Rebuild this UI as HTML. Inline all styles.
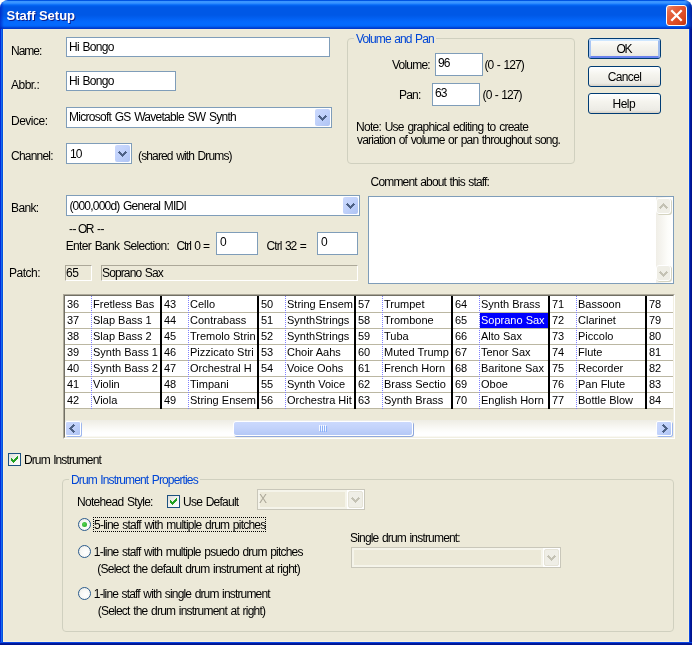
<!DOCTYPE html>
<html><head><meta charset="utf-8"><title>Staff Setup</title>
<style>
html,body{margin:0;padding:0;background:#fff;}
body{width:692px;height:645px;position:relative;overflow:hidden;font-family:"Liberation Sans",sans-serif;font-size:11px;color:#000;}
.a{position:absolute;box-sizing:border-box;}
.t{position:absolute;white-space:pre;}
.edit{position:absolute;box-sizing:border-box;border:1px solid #7F9DB9;background:#fff;}
.cbtn{position:absolute;box-sizing:border-box;width:15px;height:17px;border-radius:2px;background:linear-gradient(135deg,#CBD9FD 0%,#C1D2FB 45%,#AEC3F3 100%);}
.cbtn svg{position:absolute;left:3px;top:6px;}
.grp{position:absolute;box-sizing:border-box;border:1px solid #D0D0BF;border-radius:4px;}
.btn{position:absolute;box-sizing:border-box;width:73px;height:21px;border:1px solid #003C74;border-radius:3px;background:linear-gradient(180deg,#FFFFFF 0%,#F5F4EE 40%,#ECEBE5 85%,#D6D0C5 100%);}
.sunk{position:absolute;box-sizing:border-box;border-top:1px solid #ACA899;border-left:1px solid #ACA899;border-right:1px solid #fff;border-bottom:1px solid #fff;}
.dot{position:absolute;width:1px;background:repeating-linear-gradient(180deg,#8080FF 0px,#8080FF 1px,rgba(255,255,255,0) 1px,rgba(255,255,255,0) 2px);}
.chk{position:absolute;box-sizing:border-box;width:13px;height:13px;border:1px solid #1C5180;background:linear-gradient(135deg,#DCDCD7 0%,#F3F3EF 50%,#FFFFFF 100%);}
.chk svg{position:absolute;left:1px;top:1px;}
.rad{position:absolute;box-sizing:border-box;width:13px;height:13px;border:1px solid #2A5B8C;border-radius:50%;background:radial-gradient(circle at 60% 60%,#FFFFFF 0%,#F8F8F5 50%,#E4E4DE 100%);}
.dcombo{position:absolute;box-sizing:border-box;border:1px solid #C9C7BA;background:#F5F4EA;}
</style></head><body>
<!-- window frame -->
<div class="a" id="title" style="left:0;top:0;width:692px;height:29px;border-radius:8px 8px 0 0;background:linear-gradient(180deg,#0054E3 0px,#0054E3 1px,#3B96FF 1px,#3A94FF 3px,#1C7FFE 4px,#0668F5 5px,#005EEC 6px,#0058E6 7px,#0058E6 15px,#025FF0 18px,#0467FB 21px,#046BFF 24px,#0366FA 26px,#0054E4 27px,#003DD0 28px,#0037CB 29px);overflow:hidden"><div class="a" style="left:685px;top:0;width:7px;height:29px;background:linear-gradient(90deg,rgba(0,25,150,0) 0%,rgba(0,25,150,0.35) 50%,rgba(0,20,140,0.85) 100%)"></div><div class="a" style="left:0;top:0;width:4px;height:29px;background:linear-gradient(90deg,rgba(0,30,190,0.7) 0%,rgba(0,30,190,0) 100%)"></div></div>
<div class="a" style="left:0;top:29px;width:1px;height:616px;background:#0429D9"></div>
<div class="a" style="left:1px;top:29px;width:1px;height:616px;background:#166AEE"></div>
<div class="a" style="left:2px;top:29px;width:1px;height:616px;background:#0551DD"></div>
<div class="a" style="left:689px;top:29px;width:1px;height:616px;background:#0B47E2"></div>
<div class="a" style="left:690px;top:29px;width:1px;height:616px;background:#001A9F"></div>
<div class="a" style="left:691px;top:29px;width:1px;height:616px;background:#00148E"></div>
<div class="a" style="left:3px;top:29px;width:686px;height:613px;background:#ECE9D8;border:1px solid #F6F0DA;border-top-color:#EFEBD9"></div>
<div class="a" style="left:0;top:642px;width:692px;height:1px;background:#0B47E2"></div>
<div class="a" style="left:0;top:643px;width:692px;height:1px;background:#001A9F"></div>
<div class="a" style="left:0;top:644px;width:692px;height:1px;background:#00148E"></div>
<!-- close button -->
<div class="a" style="left:666px;top:5px;width:21px;height:21px;border:1px solid #fff;border-radius:3px;background:linear-gradient(135deg,#EFA08C 0%,#E56B48 18%,#E1532D 50%,#DA471F 75%,#BE340E 100%);">
<svg width="19" height="19" viewBox="0 0 19 19" style="position:absolute;left:0;top:0"><path d="M4.3 4.3 L14.7 14.7 M14.7 4.3 L4.3 14.7" stroke="#fff" stroke-width="2.3" stroke-linecap="butt" fill="none"/></svg></div>

<!-- edits / combos -->
<div class="edit" style="left:66px;top:37px;width:264px;height:20px"></div>
<div class="edit" style="left:66px;top:71px;width:110px;height:20px"></div>
<div class="edit" style="left:66px;top:107px;width:266px;height:21px"><div class="cbtn" style="right:1px;top:1px"><svg width="9" height="6" viewBox="0 0 9 6" shape-rendering="crispEdges"><path fill="#4D6185" d="M1 0h1v1h-1zM7 0h1v1h-1zM0 1h3v1h-3zM6 1h3v1h-3zM1 2h3v1h-3zM5 2h3v1h-3zM2 3h5v1h-5zM3 4h3v1h-3zM4 5h1v1h-1z"/></svg></div></div>
<div class="edit" style="left:66px;top:143px;width:66px;height:21px"><div class="cbtn" style="right:1px;top:1px"><svg width="9" height="6" viewBox="0 0 9 6" shape-rendering="crispEdges"><path fill="#4D6185" d="M1 0h1v1h-1zM7 0h1v1h-1zM0 1h3v1h-3zM6 1h3v1h-3zM1 2h3v1h-3zM5 2h3v1h-3zM2 3h5v1h-5zM3 4h3v1h-3zM4 5h1v1h-1z"/></svg></div></div>
<div class="edit" style="left:66px;top:195px;width:294px;height:21px"><div class="cbtn" style="right:1px;top:1px"><svg width="9" height="6" viewBox="0 0 9 6" shape-rendering="crispEdges"><path fill="#4D6185" d="M1 0h1v1h-1zM7 0h1v1h-1zM0 1h3v1h-3zM6 1h3v1h-3zM1 2h3v1h-3zM5 2h3v1h-3zM2 3h5v1h-5zM3 4h3v1h-3zM4 5h1v1h-1z"/></svg></div></div>
<div class="edit" style="left:216px;top:232px;width:42px;height:23px"></div>
<div class="edit" style="left:317px;top:232px;width:41px;height:23px"></div>
<div class="sunk" style="left:65px;top:265px;width:27px;height:16px"></div>
<div class="sunk" style="left:101px;top:265px;width:257px;height:16px"></div>

<!-- volume & pan group -->
<div class="grp" style="left:347px;top:38px;width:228px;height:126px"></div>
<div class="a" style="left:354px;top:38px;width:82px;height:1px;background:#ECE9D8"></div>
<div class="edit" style="left:435px;top:53px;width:48px;height:23px"></div>
<div class="edit" style="left:432px;top:83px;width:48px;height:23px"></div>

<!-- buttons -->
<div class="btn" style="left:588px;top:38px"><div class="a" style="left:0;top:0;width:71px;height:19px;border-radius:2px;border-style:solid;border-width:2px;border-color:#CEE7FF #9DBBEE #6982EE #A9C6F4"></div></div>
<div class="btn" style="left:588px;top:66px"></div>
<div class="btn" style="left:588px;top:93px"></div>

<!-- comment textarea -->
<div class="edit" style="left:368px;top:196px;width:306px;height:88px">
 <div class="a" style="right:0;top:0;width:17px;height:86px;background:linear-gradient(90deg,#F0EEE7 0%,#F6F5F0 35%,#FDFDFA 70%,#FFFFFF 100%)"></div>
 <div class="a" style="left:287px;top:1px;width:15px;height:16px;border-radius:3px;background:#EFEEE6;border:1px solid #fff;box-shadow:1px 1px 0 #D5D4C0"><svg width="9" height="6" viewBox="0 0 9 6" style="position:absolute;left:2px;top:4px" shape-rendering="crispEdges"><path fill="#C4C2B4" d="M4 0h1v1h-1zM3 1h3v1h-3zM2 2h5v1h-5zM1 3h3v1h-3zM5 3h3v1h-3zM0 4h3v1h-3zM6 4h3v1h-3zM1 5h1v1h-1zM7 5h1v1h-1z"/></svg></div>
 <div class="a" style="left:287px;top:68px;width:15px;height:16px;border-radius:3px;background:#EFEEE6;border:1px solid #fff;box-shadow:1px 1px 0 #D5D4C0"><svg width="9" height="6" viewBox="0 0 9 6" style="position:absolute;left:2px;top:5px" shape-rendering="crispEdges"><path fill="#C4C2B4" d="M1 0h1v1h-1zM7 0h1v1h-1zM0 1h3v1h-3zM6 1h3v1h-3zM1 2h3v1h-3zM5 2h3v1h-3zM2 3h5v1h-5zM3 4h3v1h-3zM4 5h1v1h-1z"/></svg></div>
</div>

<!-- grid -->
<div class="a" style="left:63px;top:294px;width:612px;height:145px;border-top:1px solid #ACA899;border-left:1px solid #ACA899;border-right:1px solid #fff;border-bottom:1px solid #fff;"></div>
<div class="a" style="left:64px;top:295px;width:610px;height:143px;border-top:1px solid #716F64;border-left:1px solid #716F64;border-right:1px solid #F1EFE2;border-bottom:1px solid #F1EFE2;"></div>
<div id="gl" style="position:absolute;left:0;top:0;width:692px;height:645px;will-change:transform"><div style="position:absolute;left:65px;top:296px;width:608px;height:113px;background:#fff"></div>
<div style="position:absolute;left:65px;top:312px;width:608px;height:1px;background:#BBB7A2"></div>
<div style="position:absolute;left:65px;top:328px;width:608px;height:1px;background:#BBB7A2"></div>
<div style="position:absolute;left:65px;top:344px;width:608px;height:1px;background:#BBB7A2"></div>
<div style="position:absolute;left:65px;top:360px;width:608px;height:1px;background:#BBB7A2"></div>
<div style="position:absolute;left:65px;top:376px;width:608px;height:1px;background:#BBB7A2"></div>
<div style="position:absolute;left:65px;top:392px;width:608px;height:1px;background:#BBB7A2"></div>
<div style="position:absolute;left:65px;top:408px;width:608px;height:1px;background:#BBB7A2"></div>
<div class="dot" style="left:91px;top:296px;height:113px"></div>
<div style="position:absolute;left:160px;top:296px;width:2px;height:113px;background:#000"></div>
<span class="t" style="left:67px;top:299px;font-size:11px;line-height:11px">36</span>
<span class="t" style="left:93px;top:299px;font-size:11px;line-height:11px;color:#000;width:67px;overflow:hidden;height:13px">Fretless Bas</span>
<span class="t" style="left:67px;top:315px;font-size:11px;line-height:11px">37</span>
<span class="t" style="left:93px;top:315px;font-size:11px;line-height:11px;color:#000;width:67px;overflow:hidden;height:13px">Slap Bass 1</span>
<span class="t" style="left:67px;top:331px;font-size:11px;line-height:11px">38</span>
<span class="t" style="left:93px;top:331px;font-size:11px;line-height:11px;color:#000;width:67px;overflow:hidden;height:13px">Slap Bass 2</span>
<span class="t" style="left:67px;top:347px;font-size:11px;line-height:11px">39</span>
<span class="t" style="left:93px;top:347px;font-size:11px;line-height:11px;color:#000;width:67px;overflow:hidden;height:13px">Synth Bass 1</span>
<span class="t" style="left:67px;top:363px;font-size:11px;line-height:11px">40</span>
<span class="t" style="left:93px;top:363px;font-size:11px;line-height:11px;color:#000;width:67px;overflow:hidden;height:13px">Synth Bass 2</span>
<span class="t" style="left:67px;top:379px;font-size:11px;line-height:11px">41</span>
<span class="t" style="left:93px;top:379px;font-size:11px;line-height:11px;color:#000;width:67px;overflow:hidden;height:13px">Violin</span>
<span class="t" style="left:67px;top:395px;font-size:11px;line-height:11px">42</span>
<span class="t" style="left:93px;top:395px;font-size:11px;line-height:11px;color:#000;width:67px;overflow:hidden;height:13px">Viola</span>
<div class="dot" style="left:188px;top:296px;height:113px"></div>
<div style="position:absolute;left:257px;top:296px;width:2px;height:113px;background:#000"></div>
<span class="t" style="left:164px;top:299px;font-size:11px;line-height:11px">43</span>
<span class="t" style="left:190px;top:299px;font-size:11px;line-height:11px;color:#000;width:67px;overflow:hidden;height:13px">Cello</span>
<span class="t" style="left:164px;top:315px;font-size:11px;line-height:11px">44</span>
<span class="t" style="left:190px;top:315px;font-size:11px;line-height:11px;color:#000;width:67px;overflow:hidden;height:13px">Contrabass</span>
<span class="t" style="left:164px;top:331px;font-size:11px;line-height:11px">45</span>
<span class="t" style="left:190px;top:331px;font-size:11px;line-height:11px;color:#000;width:67px;overflow:hidden;height:13px">Tremolo Strin</span>
<span class="t" style="left:164px;top:347px;font-size:11px;line-height:11px">46</span>
<span class="t" style="left:190px;top:347px;font-size:11px;line-height:11px;color:#000;width:67px;overflow:hidden;height:13px">Pizzicato Stri</span>
<span class="t" style="left:164px;top:363px;font-size:11px;line-height:11px">47</span>
<span class="t" style="left:190px;top:363px;font-size:11px;line-height:11px;color:#000;width:67px;overflow:hidden;height:13px">Orchestral H</span>
<span class="t" style="left:164px;top:379px;font-size:11px;line-height:11px">48</span>
<span class="t" style="left:190px;top:379px;font-size:11px;line-height:11px;color:#000;width:67px;overflow:hidden;height:13px">Timpani</span>
<span class="t" style="left:164px;top:395px;font-size:11px;line-height:11px">49</span>
<span class="t" style="left:190px;top:395px;font-size:11px;line-height:11px;color:#000;width:67px;overflow:hidden;height:13px">String Ensem</span>
<div class="dot" style="left:285px;top:296px;height:113px"></div>
<div style="position:absolute;left:354px;top:296px;width:2px;height:113px;background:#000"></div>
<span class="t" style="left:261px;top:299px;font-size:11px;line-height:11px">50</span>
<span class="t" style="left:287px;top:299px;font-size:11px;line-height:11px;color:#000;width:67px;overflow:hidden;height:13px">String Ensem</span>
<span class="t" style="left:261px;top:315px;font-size:11px;line-height:11px">51</span>
<span class="t" style="left:287px;top:315px;font-size:11px;line-height:11px;color:#000;width:67px;overflow:hidden;height:13px">SynthStrings</span>
<span class="t" style="left:261px;top:331px;font-size:11px;line-height:11px">52</span>
<span class="t" style="left:287px;top:331px;font-size:11px;line-height:11px;color:#000;width:67px;overflow:hidden;height:13px">SynthStrings</span>
<span class="t" style="left:261px;top:347px;font-size:11px;line-height:11px">53</span>
<span class="t" style="left:287px;top:347px;font-size:11px;line-height:11px;color:#000;width:67px;overflow:hidden;height:13px">Choir Aahs</span>
<span class="t" style="left:261px;top:363px;font-size:11px;line-height:11px">54</span>
<span class="t" style="left:287px;top:363px;font-size:11px;line-height:11px;color:#000;width:67px;overflow:hidden;height:13px">Voice Oohs</span>
<span class="t" style="left:261px;top:379px;font-size:11px;line-height:11px">55</span>
<span class="t" style="left:287px;top:379px;font-size:11px;line-height:11px;color:#000;width:67px;overflow:hidden;height:13px">Synth Voice</span>
<span class="t" style="left:261px;top:395px;font-size:11px;line-height:11px">56</span>
<span class="t" style="left:287px;top:395px;font-size:11px;line-height:11px;color:#000;width:67px;overflow:hidden;height:13px">Orchestra Hit</span>
<div class="dot" style="left:382px;top:296px;height:113px"></div>
<div style="position:absolute;left:451px;top:296px;width:2px;height:113px;background:#000"></div>
<span class="t" style="left:358px;top:299px;font-size:11px;line-height:11px">57</span>
<span class="t" style="left:384px;top:299px;font-size:11px;line-height:11px;color:#000;width:67px;overflow:hidden;height:13px">Trumpet</span>
<span class="t" style="left:358px;top:315px;font-size:11px;line-height:11px">58</span>
<span class="t" style="left:384px;top:315px;font-size:11px;line-height:11px;color:#000;width:67px;overflow:hidden;height:13px">Trombone</span>
<span class="t" style="left:358px;top:331px;font-size:11px;line-height:11px">59</span>
<span class="t" style="left:384px;top:331px;font-size:11px;line-height:11px;color:#000;width:67px;overflow:hidden;height:13px">Tuba</span>
<span class="t" style="left:358px;top:347px;font-size:11px;line-height:11px">60</span>
<span class="t" style="left:384px;top:347px;font-size:11px;line-height:11px;color:#000;width:67px;overflow:hidden;height:13px">Muted Trump</span>
<span class="t" style="left:358px;top:363px;font-size:11px;line-height:11px">61</span>
<span class="t" style="left:384px;top:363px;font-size:11px;line-height:11px;color:#000;width:67px;overflow:hidden;height:13px">French Horn</span>
<span class="t" style="left:358px;top:379px;font-size:11px;line-height:11px">62</span>
<span class="t" style="left:384px;top:379px;font-size:11px;line-height:11px;color:#000;width:67px;overflow:hidden;height:13px">Brass Sectio</span>
<span class="t" style="left:358px;top:395px;font-size:11px;line-height:11px">63</span>
<span class="t" style="left:384px;top:395px;font-size:11px;line-height:11px;color:#000;width:67px;overflow:hidden;height:13px">Synth Brass</span>
<div class="dot" style="left:479px;top:296px;height:113px"></div>
<div style="position:absolute;left:548px;top:296px;width:2px;height:113px;background:#000"></div>
<span class="t" style="left:455px;top:299px;font-size:11px;line-height:11px">64</span>
<span class="t" style="left:481px;top:299px;font-size:11px;line-height:11px;color:#000;width:67px;overflow:hidden;height:13px">Synth Brass</span>
<div style="position:absolute;left:480px;top:313px;width:68px;height:15px;background:#0000FF"></div>
<span class="t" style="left:455px;top:315px;font-size:11px;line-height:11px">65</span>
<span class="t" style="left:481px;top:315px;font-size:11px;line-height:11px;color:#fff;width:67px;overflow:hidden;height:13px">Soprano Sax</span>
<span class="t" style="left:455px;top:331px;font-size:11px;line-height:11px">66</span>
<span class="t" style="left:481px;top:331px;font-size:11px;line-height:11px;color:#000;width:67px;overflow:hidden;height:13px">Alto Sax</span>
<span class="t" style="left:455px;top:347px;font-size:11px;line-height:11px">67</span>
<span class="t" style="left:481px;top:347px;font-size:11px;line-height:11px;color:#000;width:67px;overflow:hidden;height:13px">Tenor Sax</span>
<span class="t" style="left:455px;top:363px;font-size:11px;line-height:11px">68</span>
<span class="t" style="left:481px;top:363px;font-size:11px;line-height:11px;color:#000;width:67px;overflow:hidden;height:13px">Baritone Sax</span>
<span class="t" style="left:455px;top:379px;font-size:11px;line-height:11px">69</span>
<span class="t" style="left:481px;top:379px;font-size:11px;line-height:11px;color:#000;width:67px;overflow:hidden;height:13px">Oboe</span>
<span class="t" style="left:455px;top:395px;font-size:11px;line-height:11px">70</span>
<span class="t" style="left:481px;top:395px;font-size:11px;line-height:11px;color:#000;width:67px;overflow:hidden;height:13px">English Horn</span>
<div class="dot" style="left:576px;top:296px;height:113px"></div>
<div style="position:absolute;left:645px;top:296px;width:2px;height:113px;background:#000"></div>
<span class="t" style="left:552px;top:299px;font-size:11px;line-height:11px">71</span>
<span class="t" style="left:578px;top:299px;font-size:11px;line-height:11px;color:#000;width:67px;overflow:hidden;height:13px">Bassoon</span>
<span class="t" style="left:552px;top:315px;font-size:11px;line-height:11px">72</span>
<span class="t" style="left:578px;top:315px;font-size:11px;line-height:11px;color:#000;width:67px;overflow:hidden;height:13px">Clarinet</span>
<span class="t" style="left:552px;top:331px;font-size:11px;line-height:11px">73</span>
<span class="t" style="left:578px;top:331px;font-size:11px;line-height:11px;color:#000;width:67px;overflow:hidden;height:13px">Piccolo</span>
<span class="t" style="left:552px;top:347px;font-size:11px;line-height:11px">74</span>
<span class="t" style="left:578px;top:347px;font-size:11px;line-height:11px;color:#000;width:67px;overflow:hidden;height:13px">Flute</span>
<span class="t" style="left:552px;top:363px;font-size:11px;line-height:11px">75</span>
<span class="t" style="left:578px;top:363px;font-size:11px;line-height:11px;color:#000;width:67px;overflow:hidden;height:13px">Recorder</span>
<span class="t" style="left:552px;top:379px;font-size:11px;line-height:11px">76</span>
<span class="t" style="left:578px;top:379px;font-size:11px;line-height:11px;color:#000;width:67px;overflow:hidden;height:13px">Pan Flute</span>
<span class="t" style="left:552px;top:395px;font-size:11px;line-height:11px">77</span>
<span class="t" style="left:578px;top:395px;font-size:11px;line-height:11px;color:#000;width:67px;overflow:hidden;height:13px">Bottle Blow</span>
<span class="t" style="left:649px;top:299px;font-size:11px;line-height:11px">78</span>
<span class="t" style="left:649px;top:315px;font-size:11px;line-height:11px">79</span>
<span class="t" style="left:649px;top:331px;font-size:11px;line-height:11px">80</span>
<span class="t" style="left:649px;top:347px;font-size:11px;line-height:11px">81</span>
<span class="t" style="left:649px;top:363px;font-size:11px;line-height:11px">82</span>
<span class="t" style="left:649px;top:379px;font-size:11px;line-height:11px">83</span>
<span class="t" style="left:649px;top:395px;font-size:11px;line-height:11px">84</span></div>
<!-- grid scrollbar -->
<div class="a" style="left:65px;top:420px;width:608px;height:17px;background:linear-gradient(180deg,#EEEDE5 0px,#F2F1EA 3px,#F8F7F3 7px,#FDFDFB 11px,#FFFFFF 13px,#FFFFFF 16px,#F4F2E8 17px)"></div>
<div class="a" style="left:65px;top:421px;width:16px;height:15px;border:1px solid #fff;border-radius:2px;background:linear-gradient(135deg,#CAD8FD 0%,#C1D2FB 50%,#AEC3F3 100%);box-shadow:1px 1px 0 #9DB6EE"><svg width="6" height="9" viewBox="0 0 6 9" style="position:absolute;left:3px;top:2px" shape-rendering="crispEdges"><path fill="#4D6185" d="M0 4h1v1h-1zM1 3h1v3h-1zM2 2h1v5h-1zM3 1h1v3h-1zM3 5h1v3h-1zM4 0h1v3h-1zM4 6h1v3h-1zM5 1h1v1h-1zM5 7h1v1h-1z"/></svg></div>
<div class="a" style="left:656px;top:421px;width:16px;height:15px;border:1px solid #fff;border-radius:2px;background:linear-gradient(135deg,#CAD8FD 0%,#C1D2FB 50%,#AEC3F3 100%);box-shadow:1px 1px 0 #9DB6EE"><svg width="6" height="9" viewBox="0 0 6 9" style="position:absolute;left:5px;top:2px" shape-rendering="crispEdges"><path fill="#4D6185" d="M5 4h1v1h-1zM4 3h1v3h-1zM3 2h1v5h-1zM2 1h1v3h-1zM2 5h1v3h-1zM1 0h1v3h-1zM1 6h1v3h-1zM0 1h1v1h-1zM0 7h1v1h-1z"/></svg></div>
<div class="a" style="left:233px;top:421px;width:180px;height:15px;border:1px solid #fff;border-radius:3px;background:linear-gradient(180deg,#CBD9FD 0%,#C3D3FB 45%,#B4C8F6 100%);box-shadow:1px 1px 0 #8FA8DC">
 <div class="a" style="left:85px;top:3px;width:8px;height:6px;background:repeating-linear-gradient(90deg,#F4F8FF 0px,#F4F8FF 1px,rgba(0,0,0,0) 1px,rgba(0,0,0,0) 2px)"></div>
 <div class="a" style="left:86px;top:4px;width:8px;height:6px;background:repeating-linear-gradient(90deg,#8CB0F8 0px,#8CB0F8 1px,rgba(0,0,0,0) 1px,rgba(0,0,0,0) 2px)"></div>
</div>

<!-- drum instrument -->
<div class="chk" style="left:8px;top:453px"><svg width="9" height="9" viewBox="0 0 9 9" shape-rendering="crispEdges"><path fill="#21A121" d="M1 3h1v3h-1zM2 4h1v3h-1zM3 5h1v3h-1zM4 4h1v3h-1zM5 3h1v3h-1zM6 2h1v3h-1zM7 1h1v3h-1z"/></svg></div>
<div class="grp" style="left:62px;top:479px;width:612px;height:153px"></div>
<div class="a" style="left:69px;top:479px;width:131px;height:1px;background:#ECE9D8"></div>
<div class="chk" style="left:167px;top:495px"><svg width="9" height="9" viewBox="0 0 9 9" shape-rendering="crispEdges"><path fill="#21A121" d="M1 3h1v3h-1zM2 4h1v3h-1zM3 5h1v3h-1zM4 4h1v3h-1zM5 3h1v3h-1zM6 2h1v3h-1zM7 1h1v3h-1z"/></svg></div>
<div class="dcombo" style="left:257px;top:489px;width:108px;height:21px">
 <div class="a" style="left:2px;top:2px;right:19px;bottom:2px;background:#ECE9D8"></div>
 <div class="a" style="right:0;top:0;width:17px;height:19px;background:#fff"></div>
 <div class="a" style="right:1px;top:1px;width:15px;height:17px;border-radius:2px;background:#EFEEE6;border:1px solid #E6E4D8"><svg width="9" height="6" viewBox="0 0 9 6" style="position:absolute;left:2px;top:5px" shape-rendering="crispEdges"><path fill="#C4C2B4" d="M1 0h1v1h-1zM7 0h1v1h-1zM0 1h3v1h-3zM6 1h3v1h-3zM1 2h3v1h-3zM5 2h3v1h-3zM2 3h5v1h-5zM3 4h3v1h-3zM4 5h1v1h-1z"/></svg></div>
</div>
<div class="dcombo" style="left:351px;top:547px;width:210px;height:21px">
 <div class="a" style="left:2px;top:2px;right:19px;bottom:2px;background:#ECE9D8"></div>
 <div class="a" style="right:0;top:0;width:17px;height:19px;background:#fff"></div>
 <div class="a" style="right:1px;top:1px;width:15px;height:17px;border-radius:2px;background:#EFEEE6;border:1px solid #E6E4D8"><svg width="9" height="6" viewBox="0 0 9 6" style="position:absolute;left:2px;top:5px" shape-rendering="crispEdges"><path fill="#C4C2B4" d="M1 0h1v1h-1zM7 0h1v1h-1zM0 1h3v1h-3zM6 1h3v1h-3zM1 2h3v1h-3zM5 2h3v1h-3zM2 3h5v1h-5zM3 4h3v1h-3zM4 5h1v1h-1z"/></svg></div>
</div>
<div class="rad" style="left:78px;top:518px"><div class="a" style="left:3px;top:3px;width:5px;height:5px;border-radius:50%;background:radial-gradient(circle at 40% 40%,#55D551 0%,#21A121 100%)"></div></div>
<div class="rad" style="left:78px;top:545px"></div>
<div class="rad" style="left:78px;top:587px"></div>
<!-- focus rect -->
<div class="a" style="left:93px;top:517px;width:173px;height:1px;background:repeating-linear-gradient(90deg,#000 0px,#000 1px,rgba(0,0,0,0) 1px,rgba(0,0,0,0) 2px)"></div>
<div class="a" style="left:93px;top:531px;width:173px;height:1px;background:repeating-linear-gradient(90deg,#000 0px,#000 1px,rgba(0,0,0,0) 1px,rgba(0,0,0,0) 2px)"></div>
<div class="a" style="left:93px;top:517px;width:1px;height:15px;background:repeating-linear-gradient(180deg,#000 0px,#000 1px,rgba(0,0,0,0) 1px,rgba(0,0,0,0) 2px)"></div>
<div class="a" style="left:265px;top:517px;width:1px;height:15px;background:repeating-linear-gradient(180deg,#000 0px,#000 1px,rgba(0,0,0,0) 1px,rgba(0,0,0,0) 2px)"></div>

<div id="tl" style="position:absolute;left:0;top:0;width:692px;height:645px;will-change:transform"><span class="t" style="left:6.6px;top:9px;font-size:13px;line-height:13px;color:#fff;letter-spacing:-0.02px;word-spacing:0px;font-weight:bold;text-shadow:1px 1px 0 #0A2090;">Staff Setup</span>
<span class="t" style="left:11.0px;top:45px;font-size:12px;line-height:12px;color:#000;letter-spacing:-1.0px;word-spacing:1.0px;">Name:</span>
<span class="t" style="left:69.0px;top:41px;font-size:12px;line-height:12px;color:#000;letter-spacing:-0.71px;word-spacing:1.0px;">Hi Bongo</span>
<span class="t" style="left:11.0px;top:79px;font-size:12px;line-height:12px;color:#000;letter-spacing:-0.52px;word-spacing:1.0px;">Abbr.:</span>
<span class="t" style="left:69.0px;top:75px;font-size:12px;line-height:12px;color:#000;letter-spacing:-0.71px;word-spacing:1.0px;">Hi Bongo</span>
<span class="t" style="left:11.0px;top:115px;font-size:12px;line-height:12px;color:#000;letter-spacing:-0.5px;word-spacing:1.0px;">Device:</span>
<span class="t" style="left:69.0px;top:111px;font-size:12px;line-height:12px;color:#000;letter-spacing:-0.73px;word-spacing:1.0px;">Microsoft GS Wavetable SW Synth</span>
<span class="t" style="left:11.0px;top:150px;font-size:12px;line-height:12px;color:#000;letter-spacing:-0.79px;word-spacing:1.0px;">Channel:</span>
<span class="t" style="left:70.0px;top:148px;font-size:12px;line-height:12px;color:#000;letter-spacing:-1.0px;word-spacing:1.0px;">10</span>
<span class="t" style="left:138.0px;top:150px;font-size:12px;line-height:12px;color:#000;letter-spacing:-0.86px;word-spacing:1.0px;">(shared with Drums)</span>
<span class="t" style="left:356.0px;top:33px;font-size:12px;line-height:12px;color:#0046D5;letter-spacing:-0.88px;word-spacing:1.0px;">Volume and Pan</span>
<span class="t" style="left:392.0px;top:59px;font-size:12px;line-height:12px;color:#000;letter-spacing:-0.78px;word-spacing:1.0px;">Volume:</span>
<span class="t" style="left:438.0px;top:57px;font-size:12px;line-height:12px;color:#000;letter-spacing:-1.0px;word-spacing:1.0px;">96</span>
<span class="t" style="left:484.4px;top:59px;font-size:12px;line-height:12px;color:#000;letter-spacing:-0.86px;word-spacing:1.0px;">(0 - 127)</span>
<span class="t" style="left:399.0px;top:89px;font-size:12px;line-height:12px;color:#000;letter-spacing:-0.8px;word-spacing:1.0px;">Pan:</span>
<span class="t" style="left:435.0px;top:87px;font-size:12px;line-height:12px;color:#000;letter-spacing:-1.0px;word-spacing:1.0px;">63</span>
<span class="t" style="left:482.6px;top:89px;font-size:12px;line-height:12px;color:#000;letter-spacing:-0.92px;word-spacing:1.0px;">(0 - 127)</span>
<span class="t" style="left:356.0px;top:121px;font-size:12px;line-height:12px;color:#000;letter-spacing:-0.73px;word-spacing:1.0px;">Note: Use graphical editing to create</span>
<span class="t" style="left:357.0px;top:134px;font-size:12px;line-height:12px;color:#000;letter-spacing:-0.8px;word-spacing:1.0px;">variation of volume or pan throughout song.</span>
<span class="t" style="left:370.6px;top:176px;font-size:12px;line-height:12px;color:#000;letter-spacing:-0.84px;word-spacing:1.0px;">Comment about this staff:</span>
<span class="t" style="left:11.0px;top:202px;font-size:12px;line-height:12px;color:#000;letter-spacing:-0.62px;word-spacing:1.0px;">Bank:</span>
<span class="t" style="left:69.4px;top:200px;font-size:12px;line-height:12px;color:#000;letter-spacing:-0.79px;word-spacing:1.0px;">(000,000d) General MIDI</span>
<span class="t" style="left:69.0px;top:223px;font-size:12px;line-height:12px;color:#000;letter-spacing:-0.5px;word-spacing:1.0px;">--</span>
<span class="t" style="left:78.0px;top:223px;font-size:12px;line-height:12px;color:#000;letter-spacing:-1.6px;word-spacing:1.0px;">OR</span>
<span class="t" style="left:97.0px;top:223px;font-size:12px;line-height:12px;color:#000;letter-spacing:-0.5px;word-spacing:1.0px;">--</span>
<span class="t" style="left:65.7px;top:240px;font-size:12px;line-height:12px;color:#000;letter-spacing:-0.66px;word-spacing:1.0px;">Enter Bank Selection:</span>
<span class="t" style="left:176.5px;top:240px;font-size:12px;line-height:12px;color:#000;letter-spacing:-1.07px;word-spacing:1.0px;">Ctrl 0 =</span>
<span class="t" style="left:220.0px;top:236px;font-size:12px;line-height:12px;color:#000;letter-spacing:0px;word-spacing:1.0px;">0</span>
<span class="t" style="left:266.6px;top:240px;font-size:12px;line-height:12px;color:#000;letter-spacing:-0.94px;word-spacing:1.0px;">Ctrl 32 =</span>
<span class="t" style="left:321.0px;top:236px;font-size:12px;line-height:12px;color:#000;letter-spacing:0px;word-spacing:1.0px;">0</span>
<span class="t" style="left:9.0px;top:267px;font-size:12px;line-height:12px;color:#000;letter-spacing:-0.5px;word-spacing:1.0px;">Patch:</span>
<span class="t" style="left:66.0px;top:267px;font-size:12px;line-height:12px;color:#000;letter-spacing:-0.5px;word-spacing:1.0px;">65</span>
<span class="t" style="left:102.0px;top:267px;font-size:12px;line-height:12px;color:#000;letter-spacing:-0.87px;word-spacing:1.0px;">Soprano Sax</span>
<span class="t" style="left:24.0px;top:454px;font-size:12px;line-height:12px;color:#000;letter-spacing:-0.9px;word-spacing:1.0px;">Drum Instrument</span>
<span class="t" style="left:71.0px;top:474px;font-size:12px;line-height:12px;color:#0046D5;letter-spacing:-0.87px;word-spacing:1.0px;">Drum Instrument Properties</span>
<span class="t" style="left:77.0px;top:496px;font-size:12px;line-height:12px;color:#000;letter-spacing:-0.71px;word-spacing:1.0px;">Notehead Style:</span>
<span class="t" style="left:183.0px;top:496px;font-size:12px;line-height:12px;color:#000;letter-spacing:-0.75px;word-spacing:1.0px;">Use Default</span>
<span class="t" style="left:259.0px;top:493px;font-size:12px;line-height:12px;color:#ACA899;letter-spacing:0px;word-spacing:1.0px;">X</span>
<span class="t" style="left:94.0px;top:519px;font-size:12px;line-height:12px;color:#000;letter-spacing:-0.77px;word-spacing:1.0px;">5-line staff with multiple drum pitches</span>
<span class="t" style="left:93.8px;top:546px;font-size:12px;line-height:12px;color:#000;letter-spacing:-0.79px;word-spacing:1.0px;">1-line staff with multiple psuedo drum pitches</span>
<span class="t" style="left:97.3px;top:563px;font-size:12px;line-height:12px;color:#000;letter-spacing:-0.76px;word-spacing:1.0px;">(Select the default drum instrument at right)</span>
<span class="t" style="left:93.8px;top:588px;font-size:12px;line-height:12px;color:#000;letter-spacing:-0.84px;word-spacing:1.0px;">1-line staff with single drum instrument</span>
<span class="t" style="left:97.7px;top:605px;font-size:12px;line-height:12px;color:#000;letter-spacing:-0.78px;word-spacing:1.0px;">(Select the drum instrument at right)</span>
<span class="t" style="left:350.0px;top:532px;font-size:12px;line-height:12px;color:#000;letter-spacing:-0.82px;word-spacing:1.0px;">Single drum instrument:</span>
<span class="t" style="left:616.5px;top:43px;font-size:12px;line-height:12px;color:#000;letter-spacing:-1.4px;word-spacing:1.0px;">OK</span>
<span class="t" style="left:607.8px;top:71px;font-size:12px;line-height:12px;color:#000;letter-spacing:-0.66px;word-spacing:1.0px;">Cancel</span>
<span class="t" style="left:612.5px;top:98px;font-size:12px;line-height:12px;color:#000;letter-spacing:-0.5px;word-spacing:1.0px;">Help</span></div>
</body></html>
